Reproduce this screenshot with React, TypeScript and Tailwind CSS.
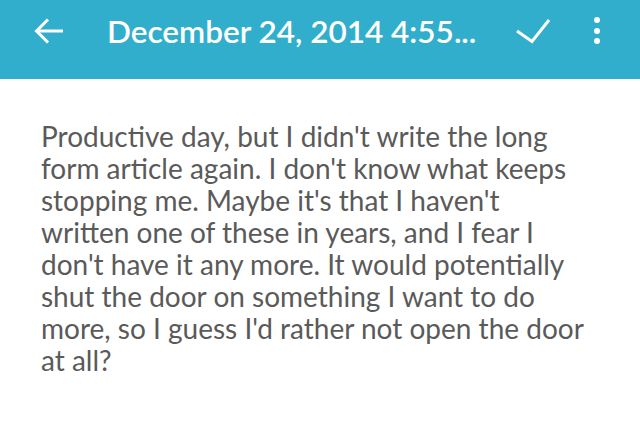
const LINES = [
  "Productive day, but I didn't write the long",
  "form article again. I don't know what keeps",
  "stopping me. Maybe it's that I haven't",
  'written one of these in years, and I fear I',
  "don't have it any more. It would potentially",
  'shut the door on something I want to do',
  "more, so I guess I'd rather not open the door",
  'at all?',
];

function BackArrow() {
  return (
    <svg width="30" height="28" viewBox="0 0 30 28" fill="none" stroke="currentColor" strokeWidth="3">
      <path d="M3 14H29" />
      <path d="M14 2.5 2.5 14 14 25.5" strokeLinejoin="miter" />
    </svg>
  );
}

function CheckMark() {
  return (
    <svg width="36" height="26" viewBox="0 0 36 26" fill="none" stroke="currentColor" strokeWidth="3">
      <path d="M2 13 17 23.5 34 2" />
    </svg>
  );
}

export default function App() {
  return (
    <div className="h-[437px] w-[640px] overflow-hidden bg-white font-['Lato',sans-serif]">
      <header className="h-[79px] bg-[#32aecd] text-white">
        <div className="flex h-[61px] items-center">
          <button className="ml-[34px] flex items-center">
            <BackArrow />
          </button>
          <h1 className="ml-[43px] min-w-0 flex-1 whitespace-nowrap text-[31.5px] leading-[40px] font-semibold">
            December 24, 2014 4:55...
          </h1>
          <button className="flex items-center">
            <CheckMark />
          </button>
          <button className="mr-[40px] ml-[43px] flex flex-col items-center gap-[4.5px]">
            <span className="h-[6px] w-[6px] rounded-full bg-white" />
            <span className="h-[6px] w-[6px] rounded-full bg-white" />
            <span className="h-[6px] w-[6px] rounded-full bg-white" />
          </button>
        </div>
      </header>
      <main className="px-[41px] pt-[41px] text-[28px] leading-[32px] text-[#5a5a5a]">
        {LINES.map((line) => (
          <p key={line} className="whitespace-nowrap">
            {line}
          </p>
        ))}
      </main>
    </div>
  );
}
